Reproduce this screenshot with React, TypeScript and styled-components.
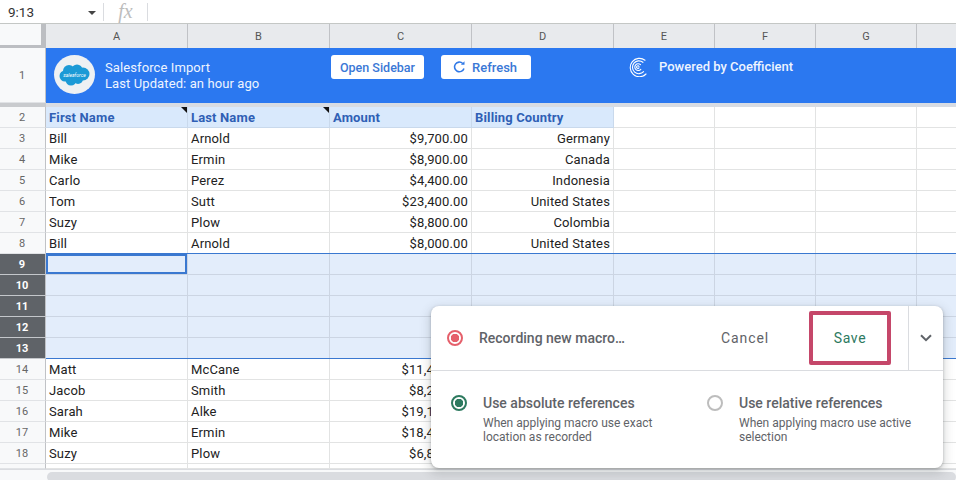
import styled, { createGlobalStyle } from 'styled-components'

type Row = { n: number; cells: Array<string> }

const ROWS_TOP: Array<Row> = [
	{ n: 3, cells: ['Bill', 'Arnold', '$9,700.00', 'Germany'] },
	{ n: 4, cells: ['Mike', 'Ermin', '$8,900.00', 'Canada'] },
	{ n: 5, cells: ['Carlo', 'Perez', '$4,400.00', 'Indonesia'] },
	{ n: 6, cells: ['Tom', 'Sutt', '$23,400.00', 'United States'] },
	{ n: 7, cells: ['Suzy', 'Plow', '$8,800.00', 'Colombia'] },
	{ n: 8, cells: ['Bill', 'Arnold', '$8,000.00', 'United States'] },
]

// the rest of these rows sits behind the macro popup
const ROWS_BOTTOM: Array<Row> = [
	{ n: 14, cells: ['Matt', 'McCane', '$11,4'] },
	{ n: 15, cells: ['Jacob', 'Smith', '$8,2'] },
	{ n: 16, cells: ['Sarah', 'Alke', '$19,1'] },
	{ n: 17, cells: ['Mike', 'Ermin', '$18,4'] },
	{ n: 18, cells: ['Suzy', 'Plow', '$6,8'] },
]

const SELECTED = [9, 10, 11, 12, 13]
const COLUMNS = ['A', 'B', 'C', 'D', 'E', 'F', 'G', '']

function App() {
	return (
		<Page>
			<GlobalStyle />
			<FormulaBar>
				<NameBox>9:13</NameBox>
				<Caret />
				<FxDivider />
				<Fx>fx</Fx>
				<FxDivider />
			</FormulaBar>

			<HeaderRow>
				<Corner />
				{COLUMNS.map((c, i) => <ColumnHead key={i}>{c}</ColumnHead>)}
			</HeaderRow>

			<BannerRow>
				<RowHead>1</RowHead>
				<Banner>
					<LogoCircle>
						<svg width="31" height="24" viewBox="0 0 31 24">
							<g fill="#1b9ad6">
								<circle cx="10" cy="8" r="6" />
								<circle cx="18" cy="7" r="5.500" />
								<circle cx="24" cy="11" r="6.500" />
								<circle cx="19" cy="16" r="5" />
								<circle cx="12" cy="17" r="5.500" />
								<circle cx="6" cy="13" r="5.500" />
							</g>
							<LogoText x="15.500" y="13.500" textAnchor="middle">salesforce</LogoText>
						</svg>
					</LogoCircle>
					<BannerText>
						<div>Salesforce Import</div>
						<div>Last Updated: an hour ago</div>
					</BannerText>
					<SidebarButton>Open Sidebar</SidebarButton>
					<RefreshButton>
						<svg width="13" height="14" viewBox="0 0 14 14" fill="none" stroke="#2f78e6" strokeWidth="1.700">
							<path d="M11.800 8.500A5.200 5.200 0 1 1 10.500 3.200" />
							<path d="M12.400 .8v3.900H8.500" fill="#2f78e6" stroke="none" />
						</svg>
						Refresh
					</RefreshButton>
					<CoefficientLogo>
						<svg width="19" height="20" viewBox="0 0 19 20" fill="none" stroke="#fff" strokeWidth="1.100" strokeLinecap="round">
							<path d="M17 3.200A9.200 9.200 0 1 0 18 17" />
							<path d="M14.900 5.300A6.400 6.400 0 1 0 15.600 14.600" />
							<path d="M12.500 7.600A3.400 3.400 0 1 0 12.800 12.300" />
							<path d="M11 9.500A1.300 1.300 0 1 0 11 10.700" />
						</svg>
					</CoefficientLogo>
					<PoweredBy>Powered by Coefficient</PoweredBy>
				</Banner>
			</BannerRow>

			<FreezeBar>
				<FreezeHead />
				<FreezeBody />
			</FreezeBar>

			<SheetRow>
				<RowHead>2</RowHead>
				<TitleCell $note>First Name</TitleCell>
				<TitleCell $note>Last Name</TitleCell>
				<TitleCell>Amount</TitleCell>
				<TitleCell>Billing Country</TitleCell>
				<Cell /><Cell /><Cell /><Cell />
			</SheetRow>

			{ROWS_TOP.map(row => <DataRow key={row.n} row={row} />)}

			<Selection>
				{SELECTED.map(n => (
					<SheetRow key={n}>
						<RowHead $selected>{n}</RowHead>
						{COLUMNS.map((c, i) => <Cell key={i} $selected $active={n === 9 && i === 0} />)}
					</SheetRow>
				))}
			</Selection>

			{ROWS_BOTTOM.map(row => <BottomRow key={row.n} row={row} />)}

			<ShortRow>
				<RowHead />
				{COLUMNS.map((c, i) => <Cell key={i} />)}
			</ShortRow>

			<ScrollRow>
				<ScrollThumb />
			</ScrollRow>

			<MacroPopup>
				<PopupTop>
					<RecordDot />
					<RecordingLabel>Recording new macro…</RecordingLabel>
					<CancelButton>Cancel</CancelButton>
					<SaveButton>Save</SaveButton>
					<MoreButton>
						<svg width="12" height="8" viewBox="0 0 12 8" fill="none" stroke="#5f6368" strokeWidth="2">
							<path d="M1 1.200l5 5 5-5" />
						</svg>
					</MoreButton>
				</PopupTop>
				<PopupOptions>
					<Option>
						<Radio $checked />
						<div>
							<OptionTitle>Use absolute references</OptionTitle>
							<OptionText>When applying macro use exact<br />location as recorded</OptionText>
						</div>
					</Option>
					<Option>
						<Radio />
						<div>
							<OptionTitle>Use relative references</OptionTitle>
							<OptionText>When applying macro use active<br />selection</OptionText>
						</div>
					</Option>
				</PopupOptions>
			</MacroPopup>
		</Page>
	)
}

function DataRow({ row }: { row: Row }) {
	return (
		<SheetRow>
			<RowHead>{row.n}</RowHead>
			<Cell>{row.cells[0]}</Cell>
			<Cell>{row.cells[1]}</Cell>
			<Cell $right>{row.cells[2]}</Cell>
			<Cell $right>{row.cells[3]}</Cell>
			<Cell /><Cell /><Cell /><Cell />
		</SheetRow>
	)
}

function BottomRow({ row }: { row: Row }) {
	return (
		<SheetRow>
			<RowHead>{row.n}</RowHead>
			<Cell>{row.cells[0]}</Cell>
			<Cell>{row.cells[1]}</Cell>
			<CutCell $right>{row.cells[2]}</CutCell>
			<Cell /><Cell /><Cell /><Cell /><Cell />
		</SheetRow>
	)
}

export default App

const TRACKS = '46px 142px 142px 142px 142px 101px 101px 101px 101px'

let GlobalStyle = createGlobalStyle`
	html, body {
		margin: 0;
		padding: 0;
		background: #fff;
		overflow: hidden;
	}

	* {
		box-sizing: border-box;
	}
`

let Page = styled.div`
	position: relative;
	width: 956px;
	height: 480px;
	overflow: hidden;
	font-family: Roboto, "Liberation Sans", sans-serif;
	font-size: 13px;
	color: #222;
`

let FormulaBar = styled.div`
	display: flex;
	align-items: center;
	height: 24px;
	background: #fff;
	border-bottom: 1px solid #c4c7c5;
`

let NameBox = styled.div`
	width: 88px;
	padding-left: 8px;
	font-size: 13.500px;
	color: #333;
`

let Caret = styled.span`
	width: 0;
	height: 0;
	border-left: 4px solid transparent;
	border-right: 4px solid transparent;
	border-top: 4px solid #444;
	margin-right: 7px;
	margin-top: 2px;
`

let FxDivider = styled.span`
	width: 1px;
	height: 18px;
	background: #dadce0;
`

let Fx = styled.span`
	width: 43px;
	text-align: center;
	font-family: "Liberation Serif", serif;
	font-style: italic;
	font-size: 20px;
	color: #bdbdbd;
`

let HeaderRow = styled.div`
	display: grid;
	grid-template-columns: ${TRACKS};
	height: 24px;
`

let Corner = styled.div`
	background: #f8f9fa;
	border-right: 5px solid #bcbec2;
	border-bottom: 3px solid #bcbec2;
`

let ColumnHead = styled.div`
	display: flex;
	align-items: center;
	justify-content: center;
	background: #e8eaed;
	border-right: 1px solid #c0c2c6;
	font-size: 11px;
	color: #555;
`

let RowHead = styled.div<{ $selected?: boolean }>`
	display: flex;
	align-items: center;
	justify-content: center;
	padding-right: 1px;
	background: ${p => p.$selected ? '#5f6368' : '#f8f9fa'};
	border-right: 1px solid #c0c2c6;
	border-bottom: 1px solid ${p => p.$selected ? '#c4c7cb' : '#e1e3e6'};
	font-size: 11px;
	font-weight: ${p => p.$selected ? 700 : 400};
	color: ${p => p.$selected ? '#fff' : '#666'};
`

let BannerRow = styled.div`
	display: grid;
	grid-template-columns: 46px 1fr;
	height: 55px;
`

let Banner = styled.div`
	display: flex;
	align-items: flex-start;
	background: #2b78f0;
	color: #fff;
	padding: 7px 0 0 8px;
`

let LogoCircle = styled.div`
	display: flex;
	align-items: center;
	justify-content: center;
	flex: none;
	width: 41px;
	height: 39px;
	border-radius: 50%;
	background: #eef1f3;
`

let LogoText = styled.text`
	font-family: Roboto, sans-serif;
	font-size: 5px;
	font-style: italic;
	fill: #fff;
`

let BannerText = styled.div`
	width: 226px;
	margin-left: 10px;
	padding-top: 5px;
	font-size: 13px;
	line-height: 16px;
	color: #eef4ff;
	letter-spacing: .1px;
`

let PillButton = styled.div`
	display: flex;
	align-items: center;
	justify-content: center;
	height: 24px;
	background: #fff;
	border-radius: 3px;
	color: #3a78d6;
	font-size: 12.500px;
	font-weight: 500;
`

let SidebarButton = styled(PillButton)`
	width: 93px;
`

let RefreshButton = styled(PillButton)`
	justify-content: flex-start;
	width: 90px;
	margin-left: 17px;
	padding-left: 12px;
	gap: 6px;
	font-size: 13px;
`

let CoefficientLogo = styled.div`
	width: 31px;
	height: 20px;
	margin-left: 97px;
	margin-top: 2px;
`

let PoweredBy = styled.div`
	font-size: 13px;
	font-weight: 500;
	line-height: 23px;
	color: #eef4ff;
`

let FreezeBar = styled.div`
	display: grid;
	grid-template-columns: 46px 1fr;
	height: 4px;
`

let FreezeHead = styled.div`
	background: #c9cbce;
`

let FreezeBody = styled.div`
	background: #d8dce3;
`

let SheetRow = styled.div`
	display: grid;
	grid-template-columns: ${TRACKS};
	height: 21px;
`

let ShortRow = styled(SheetRow)`
	height: 5px;
`

let Cell = styled.div<{ $right?: boolean; $selected?: boolean; $active?: boolean }>`
	padding: 0 3px;
	line-height: 21px;
	white-space: nowrap;
	overflow: hidden;
	text-align: ${p => p.$right ? 'right' : 'left'};
	background: ${p => p.$selected ? '#e3edfb' : '#fff'};
	border-right: 1px solid ${p => p.$selected ? '#ccd5e3' : '#e2e3e3'};
	border-bottom: 1px solid ${p => p.$selected ? '#ccd5e3' : '#e2e3e3'};
	box-shadow: ${p => p.$active ? 'inset 0 0 0 2px #3a78d0' : 'none'};
	letter-spacing: .15px;
`

let CutCell = styled(Cell)`
	padding-right: 37px;
`

let TitleCell = styled(Cell)<{ $note?: boolean }>`
	position: relative;
	background: #d9e9fc;
	border-right-color: #c9d9ec;
	border-bottom-color: #c9d9ec;
	color: #2f5fb5;
	font-weight: 700;

	&::after {
		content: '';
		display: ${p => p.$note ? 'block' : 'none'};
		position: absolute;
		top: 0;
		right: 0;
		border-top: 6px solid #111;
		border-left: 6px solid transparent;
	}
`

let Selection = styled.div`
	position: relative;
	margin-top: -1px;
	padding-top: 1px;

	&::before,
	&::after {
		content: '';
		position: absolute;
		left: 46px;
		right: 0;
		height: 1px;
		background: #3a78d0;
	}

	&::before {
		top: 0;
	}

	&::after {
		bottom: 0;
	}
`

let ScrollRow = styled.div`
	height: 11px;
	padding: 2px 0 0 47px;
	background: #f8f9fa;
	border-top: 1px solid #dadce0;
`

let ScrollThumb = styled.div`
	height: 10px;
	border-radius: 5px;
	background: #dadce0;
`

let MacroPopup = styled.div`
	position: absolute;
	left: 431px;
	top: 306px;
	width: 512px;
	height: 162px;
	background: #fff;
	border-radius: 8px;
	box-shadow: 0 1px 3px rgba(60, 64, 67, .35), 0 4px 10px 3px rgba(60, 64, 67, .15);
`

let PopupTop = styled.div`
	display: flex;
	align-items: center;
	height: 65px;
	padding-left: 16px;
	border-bottom: 1px solid #dadce0;
`

let RecordDot = styled.span`
	flex: none;
	width: 16px;
	height: 16px;
	border-radius: 50%;
	border: 2px solid #e5606b;
	background: radial-gradient(circle, #e5606b 0 4px, #fff 4.500px);
`

let RecordingLabel = styled.span`
	width: 242px;
	margin-left: 16px;
	font-size: 14px;
	font-weight: 500;
	color: #5f6368;
`

let CancelButton = styled.span`
	width: 88px;
	font-size: 14px;
	letter-spacing: .9px;
	color: #5f6368;
`

let SaveButton = styled.span`
	display: flex;
	align-items: center;
	justify-content: center;
	width: 82px;
	height: 54px;
	border: 4px solid #c5476a;
	border-radius: 2px;
	font-size: 14px;
	letter-spacing: .7px;
	color: #2d7a5f;
`

let MoreButton = styled.span`
	display: flex;
	align-items: center;
	justify-content: center;
	align-self: stretch;
	width: 35px;
	margin-left: 17px;
	border-left: 1px solid #dadce0;
`

let PopupOptions = styled.div`
	display: grid;
	grid-template-columns: 256px 1fr;
	padding: 23px 0 0 20px;
`

let Option = styled.div`
	display: flex;
	gap: 16px;
`

let Radio = styled.span<{ $checked?: boolean }>`
	flex: none;
	width: 16px;
	height: 16px;
	margin-top: 1px;
	border-radius: 50%;
	border: 2px solid ${p => p.$checked ? '#2d7a5f' : '#bdbdbd'};
	background: ${p => p.$checked ? 'radial-gradient(circle, #2d7a5f 0 4px, #fff 4.500px)' : '#fff'};
`

let OptionTitle = styled.div`
	font-size: 14px;
	font-weight: 500;
	line-height: 18px;
	color: #5f6368;
`

let OptionText = styled.div`
	margin-top: 4px;
	font-size: 12px;
	line-height: 14px;
	color: #5f6368;
`
